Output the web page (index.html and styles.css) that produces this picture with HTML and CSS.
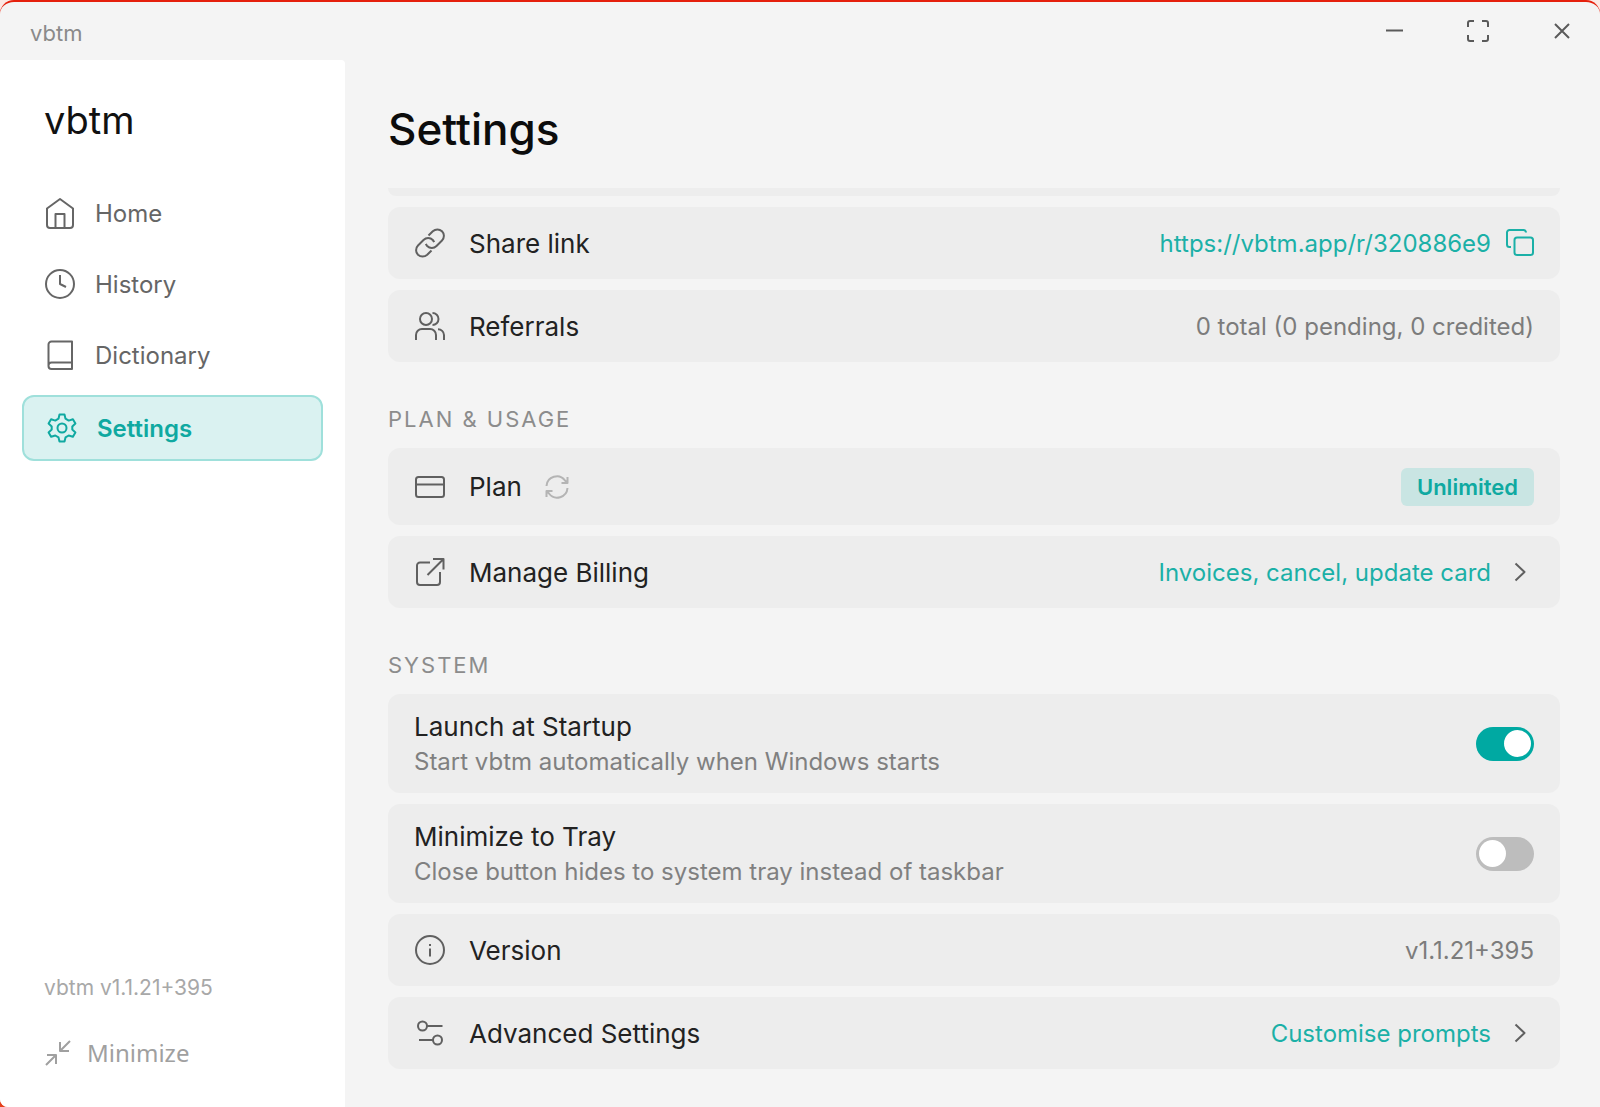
FILE: index.html
```html
<!DOCTYPE html>
<html lang="en">
<head>
  <title>vbtm</title>
  <meta charset="utf-8">
  <link rel="stylesheet" href="styles.css">
</head>
<body>
  <div class="window">

    <!-- title bar -->
    <header class="titlebar">
      <span class="app-name">vbtm</span>
      <div class="controls">
        <button class="control" aria-label="Minimize window">
          <svg viewBox="0 0 24 24"><path d="M4 11.500h17"/></svg>
        </button>
        <button class="control" aria-label="Full screen">
          <svg viewBox="0 0 24 24"><path d="M2 8V4a2 2 0 0 1 2-2h4M16 2h4a2 2 0 0 1 2 2v4M22 16v4a2 2 0 0 1-2 2h-4M8 22H4a2 2 0 0 1-2-2v-4"/></svg>
        </button>
        <button class="control" aria-label="Close">
          <svg viewBox="0 0 24 24"><path d="M5 5l14 14M19 5L5 19"/></svg>
        </button>
      </div>
    </header>

    <div class="body">
      <!-- sidebar -->
      <aside class="sidebar">
        <div class="logo">vbtm</div>
        <nav class="nav">
          <a class="nav-item" href="#home">
            <svg class="icon" viewBox="0 0 32 32"><path d="M16 2L3 11.500V28a3 3 0 0 0 3 3h20a3 3 0 0 0 3-3V11.500z"/><path d="M11.500 30.500V17h9v13.500"/></svg>
            Home
          </a>
          <a class="nav-item" href="#history">
            <svg class="icon" viewBox="0 0 32 32"><circle cx="16" cy="16" r="14"/><path d="M16 7v9l6 3"/></svg>
            History
          </a>
          <a class="nav-item" href="#dictionary">
            <svg class="icon" viewBox="0 0 32 32"><path d="M28 23.500V2.500H7.500a3 3 0 0 0-3 3V27a3 3 0 0 0 3 3H28v-6.500H7.500a3 3 0 0 0-3 3"/></svg>
            Dictionary
          </a>
          <a class="nav-item active" href="#settings">
            <svg class="icon" viewBox="0 0 32 32"><circle cx="16" cy="16" r="4.500"/><path d="M13.500 2.500h5l1 4.200 3.200 1.900 4.200-1.300 2.500 4.300-3.100 2.900v3l3.100 2.900-2.500 4.300-4.200-1.200-3.200 1.900-1 4.100h-5l-1-4.100-3.200-1.900-4.200 1.200-2.500-4.300 3.100-2.900v-3l-3.100-2.900 2.500-4.300 4.200 1.300 3.200-1.900z"/></svg>
            Settings
          </a>
        </nav>
        <div class="side-version">vbtm v1.1.21+395</div>
        <button class="minimize">
          <svg class="icon-small" viewBox="0 0 28 28"><path d="M26 2L16 12M16 3v9h9M2 26l10-10M12 25v-9H3"/></svg>
          Minimize
        </button>
      </aside>

      <!-- content -->
      <main class="content">
        <h1 class="title">Settings</h1>
        <div class="cards">
          <div class="card-end"></div>
          <div class="card">
            <svg class="icon" viewBox="0 0 32 32"><path d="M14.500 8.500l4.300-4.300a6.900 6.900 0 0 1 9.200 0 6.600 6.600 0 0 1 0 9.300L22.500 19a6.600 6.600 0 0 1-9.300 0 6.600 6.600 0 0 1-1.300-2.200"/><path d="M17.500 23.500l-4.300 4.300a6.900 6.900 0 0 1-9.200 0 6.600 6.600 0 0 1 0-9.300L9.500 13a6.600 6.600 0 0 1 9.300 0 6.600 6.600 0 0 1 1.300 2.200"/></svg>
            <span class="label">Share link</span>
            <a class="link" href="https://vbtm.app/r/320886e9">https://vbtm.app/r/320886e9</a>
            <button class="copy" aria-label="Copy link">
              <svg class="icon-small" viewBox="0 0 28 28"><rect x="8.500" y="8.500" width="18.500" height="17.500" rx="2.500"/><path d="M5 18H3.500A2.500 2.500 0 0 1 1 15.500v-12A2.500 2.500 0 0 1 3.500 1h14A2.500 2.500 0 0 1 20 3.500"/></svg>
            </button>
          </div>
          <div class="card">
            <svg class="icon" viewBox="0 0 32 32"><circle cx="12" cy="9" r="6"/><path d="M2 30v-5a6 6 0 0 1 6-6h8a6 6 0 0 1 6 6v5M18.500 3a6 6 0 0 1 0 12M24 19.200a6 6 0 0 1 6 5.800v5"/></svg>
            <span class="label">Referrals</span>
            <span class="value">0 total (0 pending, 0 credited)</span>
          </div>

          <h2 class="section">PLAN &amp; USAGE</h2>
          <div class="card plan">
            <svg class="icon" viewBox="0 0 32 32"><rect x="2" y="6" width="28" height="20" rx="2.500"/><path d="M2 13.500h28"/></svg>
            <span class="label">Plan</span>
            <button class="refresh" aria-label="Refresh plan">
              <svg class="icon-refresh" viewBox="0 0 24 24"><path d="M1.500 11A10.300 10.300 0 0 1 20 5.500L22.500 8M22.500 2v6h-6M22.500 13A10.300 10.300 0 0 1 4 18.500L1.500 16M1.500 22v-6h6"/></svg>
            </button>
            <span class="badge">Unlimited</span>
          </div>
          <a class="card" href="#billing">
            <svg class="icon" viewBox="0 0 32 32"><path d="M16 6.500H6a3 3 0 0 0-3 3V26a3 3 0 0 0 3 3h17a3 3 0 0 0 3-3V16"/><path d="M19 3h10.500v10.500M29.500 3L13.500 19"/></svg>
            <span class="label">Manage Billing</span>
            <span class="link">Invoices, cancel, update card</span>
            <svg class="icon-small" viewBox="0 0 28 28"><path d="M9.500 5.500l9 8.500-9 8.500"/></svg>
          </a>

          <h2 class="section">SYSTEM</h2>
          <label class="card tall">
            <span class="texts">
              <span class="name">Launch at Startup</span>
              <span class="hint">Start vbtm automatically when Windows starts</span>
            </span>
            <input class="toggle" type="checkbox" checked>
          </label>
          <label class="card tall">
            <span class="texts">
              <span class="name">Minimize to Tray</span>
              <span class="hint">Close button hides to system tray instead of taskbar</span>
            </span>
            <input class="toggle" type="checkbox">
          </label>
          <div class="card">
            <svg class="icon" viewBox="0 0 32 32"><circle cx="16" cy="16" r="14"/><path d="M16 14.500v8M16 10v2"/></svg>
            <span class="label">Version</span>
            <span class="value">v1.1.21+395</span>
          </div>
          <a class="card" href="#advanced">
            <svg class="icon" viewBox="0 0 32 32"><circle cx="8.500" cy="9" r="4.500"/><path d="M13 9h15.500M5 23h14"/><circle cx="23.500" cy="23" r="4.500"/></svg>
            <span class="label">Advanced Settings</span>
            <span class="link">Customise prompts</span>
            <svg class="icon-small" viewBox="0 0 28 28"><path d="M9.500 5.500l9 8.500-9 8.500"/></svg>
          </a>
        </div>
      </main>
    </div>
  </div>
</body>
</html>
```
FILE: styles.css
```css
* {
  box-sizing: border-box;
}

body {
  margin: 0;
  background: linear-gradient(#fbe9e5 50%, #e5401c 50%);
  font-family: Inter, "Liberation Sans", sans-serif;
  color: #1c1c1c;
}

button {
  padding: 0;
  border: 0;
  background: none;
  font: inherit;
  color: inherit;
}

a {
  color: inherit;
  text-decoration: none;
}

svg {
  flex: none;
  fill: none;
  stroke: currentColor;
  stroke-width: 2;
  stroke-linejoin: round;
}

.window {
  display: flex;
  flex-direction: column;
  min-height: 100vh;
  border-top: 2px solid #e5200c;
  border-radius: 14px 14px 0 8px;
  background: #f4f4f4;
  overflow: hidden;
}

/* title bar */
.titlebar {
  display: flex;
  align-items: center;
  justify-content: space-between;
  height: 58px;
  padding: 0 26px 0 30px;
}
.app-name {
  padding-top: 4px;
  font-size: 22px;
  color: #8a8a8a;
}
.controls {
  display: flex;
  gap: 60px;
}
.control {
  height: 24px;
  color: #5a5a5a;
}
.control svg {
  width: 24px;
  height: 24px;
}

.body {
  display: flex;
  flex: 1;
}

/* sidebar */
.sidebar {
  display: flex;
  flex-direction: column;
  width: 345px;
  padding: 38px 22px 37px;
  border-top-right-radius: 4px;
  background: #fff;
}
.logo {
  padding-left: 22px;
  font-size: 38px;
  line-height: 44px;
  color: #111;
}
.nav {
  display: flex;
  flex-direction: column;
  gap: 9px;
  margin-top: 40px;
}
.nav-item {
  display: flex;
  align-items: center;
  gap: 19px;
  height: 62px;
  padding: 0 22px;
  font-size: 24px;
  color: #666;
}
.nav-item.active {
  height: 66px;
  border: 2px solid #9fe0db;
  border-radius: 12px;
  background: #daf2f1;
  font-weight: 600;
  color: #0fa9a1;
}
.icon {
  width: 32px;
  height: 32px;
}
.icon-small {
  width: 28px;
  height: 28px;
}
.side-version {
  margin-top: auto;
  padding-left: 22px;
  font-size: 21px;
  line-height: 28px;
  color: #a8a8a8;
}
.minimize {
  display: flex;
  align-items: center;
  gap: 15px;
  margin-top: 34px;
  padding-left: 22px;
  font-family: "Noto Sans", sans-serif;
  font-size: 24px;
  line-height: 34px;
  color: #a0a0a0;
}

/* content */
.content {
  flex: 1;
  padding: 40px 40px 37px 43px;
}
.title {
  margin: 0 0 30px;
  font-size: 44px;
  font-weight: 500;
  line-height: 58px;
  color: #0c0c0c;
}
.cards {
  display: flex;
  flex-direction: column;
  gap: 11px;
}
.card-end {
  height: 8px;
  border-radius: 0 0 12px 12px;
  background: #ededed;
}
.card {
  display: flex;
  align-items: center;
  height: 72px;
  padding: 0 26px;
  border-radius: 12px;
  background: #ededed;
  color: #606060;
}
.card.plan {
  height: 77px;
}
.card.tall {
  height: 99px;
}
.label {
  margin-left: 23px;
  font-size: 26px;
  color: #222;
}
.link,
.value,
.badge {
  margin-left: auto;
  font-size: 24px;
}
.value {
  color: #7c7c7c;
}
.link {
  margin-right: 15px;
  color: #1bb0a7;
}
.copy {
  height: 28px;
  color: #1bb0a7;
}
.refresh {
  height: 24px;
  margin-left: 23px;
  color: #b4b4b4;
}
.icon-refresh {
  width: 24px;
  height: 24px;
}
.badge {
  padding: 0 16px;
  border-radius: 6px;
  background: #c9e5e3;
  font-size: 22px;
  font-weight: 600;
  line-height: 38px;
  color: #0fa9a1;
}
.section {
  margin: 31px 0 3px;
  font-size: 22px;
  font-weight: 400;
  line-height: 30px;
  letter-spacing: 2px;
  color: #8c8c8c;
}
.texts {
  display: flex;
  flex-direction: column;
}
.name {
  font-size: 26px;
  line-height: 36px;
  color: #222;
}
.hint {
  font-size: 24px;
  line-height: 34px;
  color: #808080;
}

/* toggle switch */
.toggle {
  display: flex;
  align-items: center;
  appearance: none;
  width: 58px;
  height: 34px;
  margin: 0 0 0 auto;
  padding: 3px;
  border-radius: 17px;
  background: #bdbdbd;
}
.toggle::before {
  content: "";
  width: 27px;
  height: 27px;
  border-radius: 50%;
  background: #fff;
}
.toggle:checked {
  justify-content: flex-end;
  background: #00a9a2;
}
```
